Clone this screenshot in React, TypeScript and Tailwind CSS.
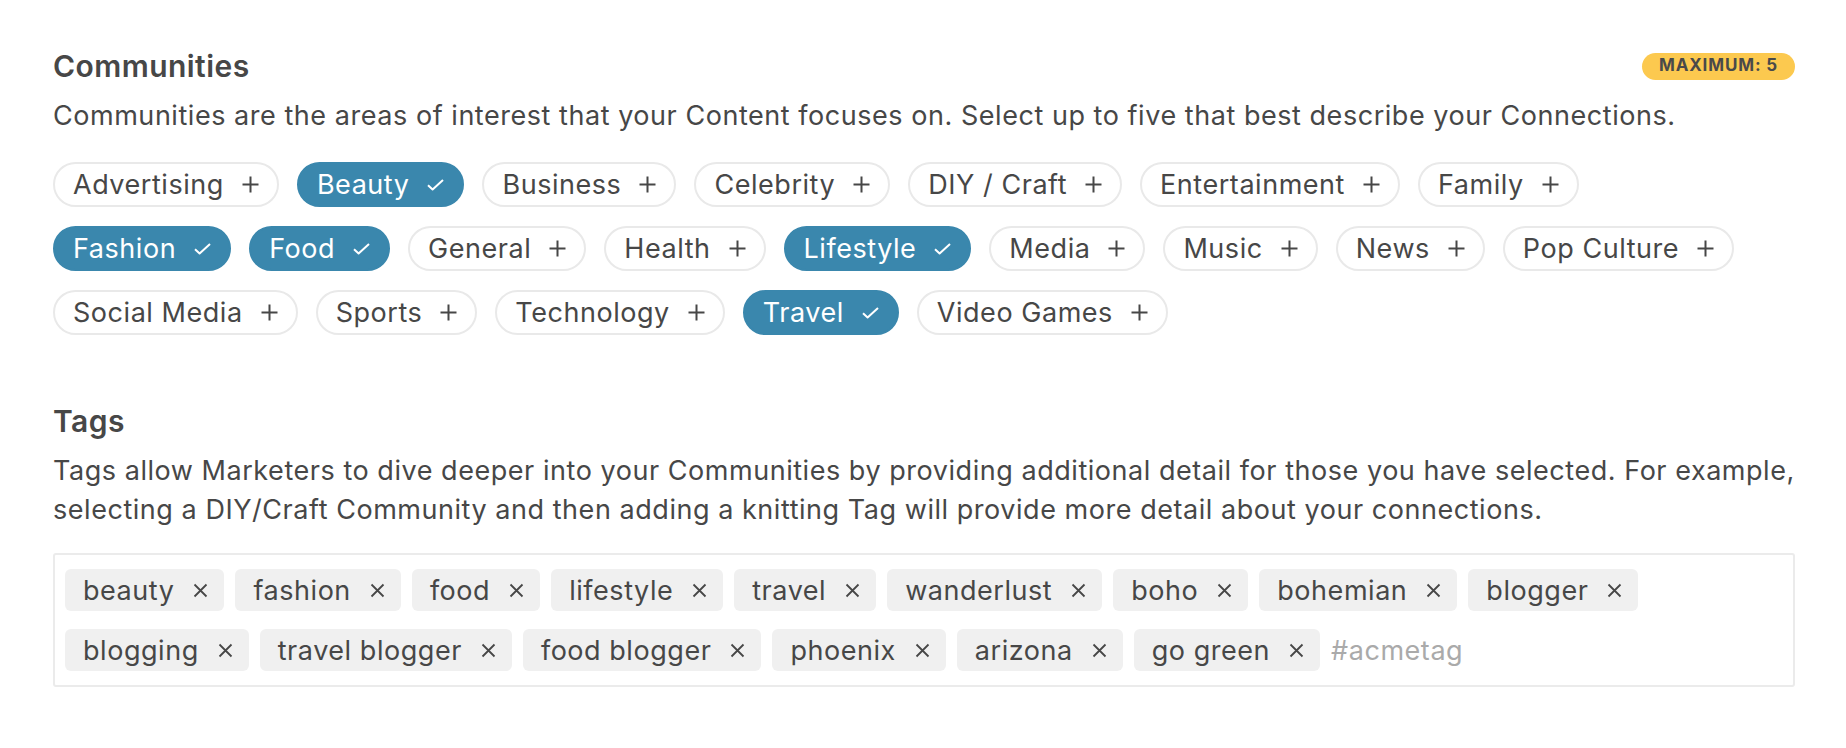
import React from "react"

// Communities + Tags settings panel

type Community = { label: string; selected?: boolean }

const communityRows: Community[][] = [
  [
    { label: "Advertising" },
    { label: "Beauty", selected: true },
    { label: "Business" },
    { label: "Celebrity" },
    { label: "DIY / Craft" },
    { label: "Entertainment" },
    { label: "Family" },
  ],
  [
    { label: "Fashion", selected: true },
    { label: "Food", selected: true },
    { label: "General" },
    { label: "Health" },
    { label: "Lifestyle", selected: true },
    { label: "Media" },
    { label: "Music" },
    { label: "News" },
    { label: "Pop Culture" },
  ],
  [
    { label: "Social Media" },
    { label: "Sports" },
    { label: "Technology" },
    { label: "Travel", selected: true },
    { label: "Video Games" },
  ],
]

const tagRows: string[][] = [
  ["beauty", "fashion", "food", "lifestyle", "travel", "wanderlust", "boho", "bohemian", "blogger"],
  ["blogging", "travel blogger", "food blogger", "phoenix", "arizona", "go green"],
]

function PlusIcon() {
  return (
    <svg width="17" height="17" viewBox="0 0 17 17" fill="none" stroke="currentColor" strokeWidth="2">
      <path d="M8.5 0.5v16M0.5 8.5h16" />
    </svg>
  )
}

function CheckIcon() {
  return (
    <svg width="17" height="12" viewBox="0 0 17 12" fill="none" stroke="currentColor" strokeWidth="2" strokeLinejoin="round">
      <path d="M1 6.2l4.6 4.3L16 1" />
    </svg>
  )
}

function XIcon() {
  return (
    <svg width="15" height="15" viewBox="0 0 15 15" fill="none" stroke="currentColor" strokeWidth="1.8">
      <path d="M1.5 1.5l12 12M13.5 1.5l-12 12" />
    </svg>
  )
}

function CommunityPill({ label, selected }: Community) {
  return (
    <button
      type="button"
      className={
        selected
          ? "flex h-[45px] items-center gap-[18px] rounded-full border-2 border-[#3a87ad] bg-[#3a87ad] pl-[18px] pr-[18px] text-white"
          : "flex h-[45px] items-center gap-[18px] rounded-full border-2 border-[#e9e9e9] bg-white pl-[18px] pr-[18px] text-[#474747]"
      }
    >
      <span className="leading-none">{label}</span>
      {selected ? <CheckIcon /> : <PlusIcon />}
    </button>
  )
}

function TagChip({ label }: { label: string }) {
  return (
    <span className="flex h-[42px] items-center gap-[19px] rounded-[6px] bg-[#f0f0f0] pl-[18px] pr-[16px] text-[#474747]">
      <span className="leading-none">{label}</span>
      <XIcon />
    </span>
  )
}

export default function App() {
  return (
    <div className="min-h-screen bg-white pl-[53px] pr-[51px] pt-[48px] font-['Inter','Liberation_Sans',sans-serif] text-[27px] tracking-[0.02em] text-[#474747]">
      <section>
        <div className="flex h-[36px] items-center justify-between">
          <h2 className="text-[30px] font-semibold leading-[36px] tracking-[0.015em] text-[#474747]">Communities</h2>
          <span className="flex h-[27px] items-center rounded-full bg-[#fcc94f] px-[17px] text-[17px] font-bold tracking-[0.05em] text-[#4a4a4a]">
            MAXIMUM: 5
          </span>
        </div>
        <p className="mt-[12px] leading-[39px]">
          Communities are the areas of interest that your Content focuses on. Select up to five that best describe your
          Connections.
        </p>
        <div className="mt-[27px] flex flex-col gap-[19px]">
          {communityRows.map((row, i) => (
            <div key={i} className="flex gap-[18px]">
              {row.map((c) => (
                <CommunityPill key={c.label} {...c} />
              ))}
            </div>
          ))}
        </div>
      </section>

      <section className="mt-[68px]">
        <h2 className="text-[30px] font-semibold leading-[36px] tracking-[0.015em]">Tags</h2>
        <p className="mt-[12px] leading-[39px]">
          Tags allow Marketers to dive deeper into your Communities by providing additional detail for those you have
          selected. For example,
          <br />
          selecting a DIY/Craft Community and then adding a knitting Tag will provide more detail about your connections.
        </p>
        <div className="mt-[24px] flex flex-col gap-[18px] rounded-[3px] border-2 border-[#ebebeb] py-[14px] pl-[10px] pr-[10px]">
          {tagRows.map((row, i) => (
            <div key={i} className="flex items-center gap-[11px]">
              {row.map((t) => (
                <TagChip key={t} label={t} />
              ))}
              {i === tagRows.length - 1 && (
                <input
                  className="w-[200px] bg-transparent leading-none tracking-[0.02em] text-[#474747] outline-none placeholder:text-[#aaaaaa]"
                  placeholder="#acmetag"
                />
              )}
            </div>
          ))}
        </div>
      </section>
    </div>
  )
}
